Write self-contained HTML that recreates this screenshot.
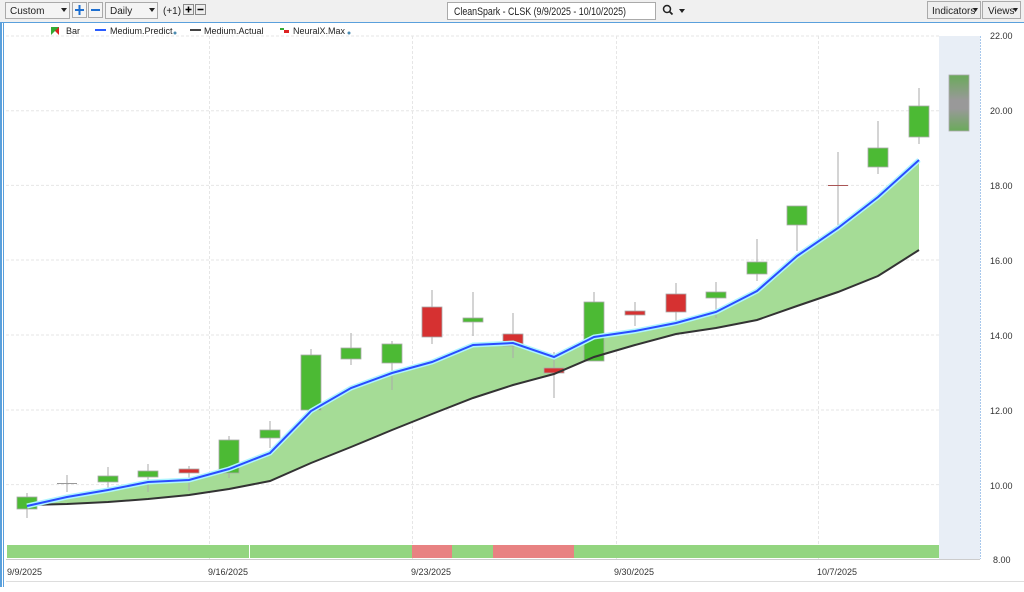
<!DOCTYPE html>
<html><head><meta charset="utf-8"><style>
body{margin:0;width:1024px;height:587px;overflow:hidden;background:#fff;font-family:"Liberation Sans",sans-serif;}
</style></head><body>
<svg width="1024" height="587" xmlns="http://www.w3.org/2000/svg" font-family="Liberation Sans, sans-serif">
<defs>
<linearGradient id="fc" x1="0" y1="0" x2="0" y2="1"><stop offset="0" stop-color="#6aaa5a"/><stop offset="0.45" stop-color="#999"/><stop offset="0.6" stop-color="#999"/><stop offset="1" stop-color="#6aaa5a"/></linearGradient>
</defs>
<rect x="0" y="0" width="1024" height="22" fill="#f0f0f0"/>
<line x1="0" y1="22.5" x2="1024" y2="22.5" stroke="#5aa0dc" stroke-width="1"/>
<rect x="0" y="22" width="2" height="565" fill="#5aa0dc"/>
<rect x="3" y="22" width="1" height="565" fill="#5aa0dc"/>
<!-- toolbar -->
<rect x="5.5" y="2.5" width="64" height="16" fill="#f4f4f4" stroke="#aaa"/>
<text x="10" y="14" font-size="10" fill="#222">Custom</text>
<path d="M61 8h6l-3 4z" fill="#222"/>
<rect x="72.5" y="2.5" width="14" height="15" fill="#f4f4f4" stroke="#aaa"/>
<path d="M79.5 5v10M75 10h9" stroke="#1e6fd0" stroke-width="2"/>
<rect x="88.5" y="2.5" width="14" height="15" fill="#f4f4f4" stroke="#aaa"/>
<path d="M91 10h9" stroke="#1e6fd0" stroke-width="2"/>
<rect x="105.5" y="2.5" width="52" height="16" fill="#f4f4f4" stroke="#aaa"/>
<text x="110" y="14" font-size="10" fill="#222">Daily</text>
<path d="M149 8h6l-3 4z" fill="#222"/>
<text x="163" y="14" font-size="10" fill="#222">(+1)</text>
<rect x="183.5" y="4.5" width="10" height="10" fill="#eee" stroke="#888"/>
<path d="M188.5 6.5v6M185.5 9.5h6" stroke="#000" stroke-width="1.5"/>
<rect x="195.5" y="4.5" width="10" height="10" fill="#eee" stroke="#888"/>
<path d="M197.5 9.5h6" stroke="#000" stroke-width="1.5"/>
<rect x="447.5" y="2.5" width="208" height="17" fill="#fff" stroke="#aaa"/>
<text x="454" y="15" font-size="11" fill="#222" textLength="172" lengthAdjust="spacingAndGlyphs">CleanSpark - CLSK (9/9/2025 - 10/10/2025)</text>
<circle cx="667" cy="9" r="3.5" fill="none" stroke="#222" stroke-width="1.5"/>
<path d="M669.5 11.5l3 3" stroke="#222" stroke-width="1.8"/>
<path d="M679 9h6l-3 4z" fill="#222"/>
<rect x="927.5" y="1.5" width="53" height="17" fill="#eee" stroke="#aaa"/>
<text x="932" y="14" font-size="10" fill="#222">Indicators</text>
<path d="M973 8h5l-2.5 4z" fill="#222"/>
<rect x="982.5" y="1.5" width="38" height="17" fill="#eee" stroke="#aaa"/>
<text x="988" y="14" font-size="10" fill="#222">Views</text>
<path d="M1013 8h5l-2.5 4z" fill="#222"/>
<!-- legend -->
<path d="M51 27h8v8z" fill="#d22"/><path d="M51 27h8l-8 8z" fill="#3a3"/>
<text x="66" y="34" font-size="9" fill="#222">Bar</text>
<rect x="95" y="29" width="11" height="2" fill="#2a5cff"/>
<text x="110" y="34" font-size="9" fill="#222">Medium.Predict</text>
<circle cx="175" cy="33" r="1.5" fill="#4a8ab0"/>
<rect x="190" y="29" width="11" height="2" fill="#444"/>
<text x="204" y="34" font-size="9" fill="#222">Medium.Actual</text>
<rect x="280" y="28" width="4" height="2" fill="#3a3"/><rect x="284" y="30" width="5" height="3" fill="#d22"/>
<text x="293" y="34" font-size="9" fill="#222">NeuralX.Max</text>
<circle cx="349" cy="33" r="1.5" fill="#4a8ab0"/>
<!-- forecast column -->
<rect x="939" y="36" width="41" height="523" fill="#e8eef6"/>
<line x1="980.5" y1="36" x2="980.5" y2="559" stroke="#a8c8ec" stroke-dasharray="2,1"/>
<!-- grid -->
<g stroke="#e6e6e6" stroke-dasharray="3,2">
<line x1="6" y1="36" x2="939" y2="36"/><line x1="6" y1="110.7" x2="939" y2="110.7"/>
<line x1="6" y1="185.4" x2="939" y2="185.4"/><line x1="6" y1="260" x2="939" y2="260"/>
<line x1="6" y1="335" x2="939" y2="335"/><line x1="6" y1="410" x2="939" y2="410"/>
<line x1="6" y1="484.6" x2="939" y2="484.6"/>
<line x1="209.5" y1="36" x2="209.5" y2="560"/><line x1="412.5" y1="36" x2="412.5" y2="560"/>
<line x1="616.5" y1="36" x2="616.5" y2="560"/><line x1="818.5" y1="36" x2="818.5" y2="560"/>
</g>
<!-- axis labels -->
<g font-size="9" fill="#333">
<text x="990" y="39">22.00</text><text x="990" y="114">20.00</text><text x="990" y="189">18.00</text>
<text x="990" y="264">16.00</text><text x="990" y="339">14.00</text><text x="990" y="414">12.00</text>
<text x="990" y="489">10.00</text><text x="993" y="563">8.00</text>
<text x="7" y="575">9/9/2025</text><text x="208" y="575">9/16/2025</text><text x="411" y="575">9/23/2025</text>
<text x="614" y="575">9/30/2025</text><text x="817" y="575">10/7/2025</text>
</g>
<line x1="6" y1="559.5" x2="980" y2="559.5" stroke="#ccc"/>
<!-- area fill -->
<polygon fill="#a5dc96" points="27,506 67,497 108,490 148,482 189,480 229,469 270,453 311,411 351,388 392,373 432,362 473,345 513,343 554,357 594,337 635,331 676,323 716,312 757,291 797,256 838,228 878,197 919,160 919,250 878,276 838,292 797,306 757,320 716,328 676,334 635,345 594,357 554,374 513,385 473,398 432,414 392,430 351,447 311,463 270,481 229,489 189,495 148,499 108,502 67,504 27,505"/>
<!-- candles -->
<g stroke="#aaa" stroke-width="1">
<line x1="27" y1="493" x2="27" y2="518"/><line x1="67" y1="475" x2="67" y2="492"/>
<line x1="108" y1="467" x2="108" y2="488"/><line x1="148" y1="464" x2="148" y2="492"/>
<line x1="189" y1="466" x2="189" y2="491"/><line x1="229" y1="436" x2="229" y2="478"/>
<line x1="270" y1="421" x2="270" y2="448"/><line x1="311" y1="349" x2="311" y2="412"/>
<line x1="351" y1="333" x2="351" y2="365"/><line x1="392" y1="341" x2="392" y2="390"/>
<line x1="432" y1="290" x2="432" y2="344"/><line x1="473" y1="292" x2="473" y2="336"/>
<line x1="513" y1="313" x2="513" y2="358"/><line x1="554" y1="352" x2="554" y2="398"/>
<line x1="594" y1="292" x2="594" y2="361"/><line x1="635" y1="302" x2="635" y2="326"/>
<line x1="676" y1="283" x2="676" y2="326"/><line x1="716" y1="282" x2="716" y2="318"/>
<line x1="757" y1="239" x2="757" y2="281"/><line x1="797" y1="206" x2="797" y2="251"/>
<line x1="838" y1="152" x2="838" y2="225"/><line x1="878" y1="121" x2="878" y2="174"/>
<line x1="919" y1="88" x2="919" y2="144"/>
<line x1="57" y1="483.5" x2="77" y2="483.5" stroke="#999"/>
<line x1="828" y1="185.5" x2="848" y2="185.5" stroke="#a55"/>
</g>
<g stroke="#aaa" stroke-width="0.8">
<rect x="17" y="497" width="20" height="12" fill="#4cba34"/>
<rect x="98" y="476" width="20" height="6" fill="#4cba34"/>
<rect x="138" y="471" width="20" height="6" fill="#4cba34"/>
<rect x="179" y="469" width="20" height="4" fill="#d63131"/>
<rect x="219" y="440" width="20" height="33" fill="#4cba34"/>
<rect x="260" y="430" width="20" height="8" fill="#4cba34"/>
<rect x="301" y="355" width="20" height="55" fill="#4cba34"/>
<rect x="341" y="348" width="20" height="11" fill="#4cba34"/>
<rect x="382" y="344" width="20" height="19" fill="#4cba34"/>
<rect x="422" y="307" width="20" height="30" fill="#d63131"/>
<rect x="463" y="318" width="20" height="4" fill="#4cba34"/>
<rect x="503" y="334" width="20" height="12" fill="#d63131"/>
<rect x="544" y="368" width="20" height="5" fill="#d63131"/>
<rect x="584" y="302" width="20" height="59" fill="#4cba34"/>
<rect x="625" y="311" width="20" height="4" fill="#d63131"/>
<rect x="666" y="294" width="20" height="18" fill="#d63131"/>
<rect x="706" y="292" width="20" height="6" fill="#4cba34"/>
<rect x="747" y="262" width="20" height="12" fill="#4cba34"/>
<rect x="787" y="206" width="20" height="19" fill="#4cba34"/>
<rect x="868" y="148" width="20" height="19" fill="#4cba34"/>
<rect x="909" y="106" width="20" height="31" fill="#4cba34"/>
<rect x="949" y="75" width="20" height="56" fill="url(#fc)"/>
</g>
<!-- lines -->
<polyline fill="none" stroke="#333" stroke-width="2" points="27,505 67,504 108,502 148,499 189,495 229,489 270,481 311,463 351,447 392,430 432,414 473,398 513,385 554,374 594,357 635,345 676,334 716,328 757,320 797,306 838,292 878,276 919,250"/>
<polyline fill="none" stroke="#aef4ff" stroke-width="5" points="27,506 67,497 108,490 148,482 189,480 229,469 270,453 311,411 351,388 392,373 432,362 473,345 513,343 554,357 594,337 635,331 676,323 716,312 757,291 797,256 838,228 878,197 919,160"/>
<polyline fill="none" stroke="#2a4cff" stroke-width="2" points="27,506 67,497 108,490 148,482 189,480 229,469 270,453 311,411 351,388 392,373 432,362 473,345 513,343 554,357 594,337 635,331 676,323 716,312 757,291 797,256 838,228 878,197 919,160"/>
<!-- bottom strip -->
<rect x="7" y="545" width="932" height="13" fill="#93d580"/>
<rect x="412" y="545" width="40" height="13" fill="#e88282"/>
<rect x="493" y="545" width="81" height="13" fill="#e88282"/>
<line x1="249.5" y1="545" x2="249.5" y2="558" stroke="#fff"/>
<line x1="6" y1="581.5" x2="1024" y2="581.5" stroke="#ddd"/>
</svg>
</body></html>
